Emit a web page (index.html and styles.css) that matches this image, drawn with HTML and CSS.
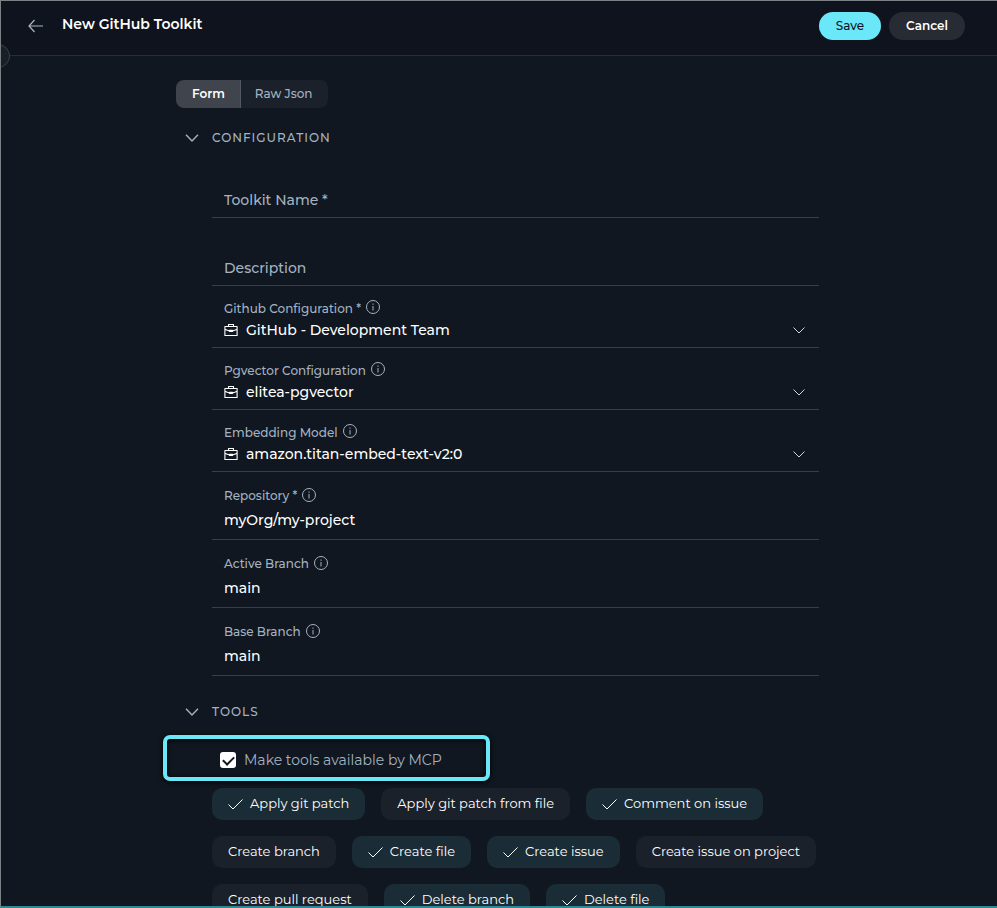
FILE: index.html
```html
<!DOCTYPE html>
<html lang="en">
<head>
  <meta charset="UTF-8">
  <meta name="viewport" content="width=device-width, initial-scale=1.0">
  <title>New GitHub Toolkit</title>
  <link rel="stylesheet" href="styles.css">
</head>
<body>
  <!-- shared icons -->
  <svg class="sprite" aria-hidden="true">
    <symbol id="icon-info" viewBox="0 0 16 16">
      <circle cx="8" cy="8" r="6.5" fill="none" stroke="currentColor" stroke-width="1"/>
      <path d="M8 7v4.500M8 4.500v1.300" fill="none" stroke="currentColor" stroke-width="1"/>
    </symbol>
    <symbol id="icon-case" viewBox="0 0 14 14">
      <path d="M.9 3.500h12.200v9H.9zM4.500 3.300V1.500h5v1.800M1 6.300c1.500.9 3 1.400 4.500 1.600M13 6.300c-1.500.9-3 1.400-4.500 1.600M5.500 7.400h3v1.100h-3z" fill="none" stroke="currentColor" stroke-width="1.1" stroke-linejoin="round"/>
    </symbol>
    <symbol id="icon-chevron" viewBox="0 0 16 16">
      <path d="M2.500 5.500 8 11l5.500-5.500" fill="none" stroke="currentColor" stroke-width="1"/>
    </symbol>
    <symbol id="icon-chevron-bold" viewBox="0 0 16 16">
      <path d="M2 4.800 8 11l6-6.200" fill="none" stroke="currentColor" stroke-width="1.4"/>
    </symbol>
    <symbol id="icon-check" viewBox="0 0 16 16">
      <path d="M.5 8.500l4.500 4.500 9.500-9.500" fill="none" stroke="currentColor" stroke-width="1"/>
    </symbol>
  </svg>

  <header class="topbar">
    <button type="button" class="back-btn" aria-label="Back">
      <svg viewBox="0 0 16 16"><path d="M15 8H1.500M6.500 2 1 8 6.500 14" fill="none" stroke="currentColor" stroke-width="1.2"/></svg>
    </button>
    <h1>New GitHub Toolkit</h1>
    <div class="actions">
      <button type="submit" form="toolkit-form" class="btn btn-save">Save</button>
      <button type="button" class="btn btn-cancel">Cancel</button>
    </div>
    <button type="button" class="sidebar-toggle" aria-label="Open sidebar"></button>
  </header>

  <main>
    <form id="toolkit-form" class="container">
      <div class="tabs">
        <button type="button" class="tab active">Form</button>
        <button type="button" class="tab">Raw Json</button>
      </div>

      <section>
        <h2><button type="button" class="section-btn" aria-expanded="true"><svg><use href="#icon-chevron-bold"/></svg><span>Configuration</span></button></h2>
        <div class="section-body">
          <div class="field field-empty">
            <input type="text" id="name" aria-label="Toolkit Name" placeholder="Toolkit Name *" required>
          </div>
          <div class="field field-empty">
            <input type="text" id="description" aria-label="Description" placeholder="Description">
          </div>
          <div class="field field-select">
            <div class="field-label"><label for="github">Github Configuration *</label><svg><use href="#icon-info"/></svg></div>
            <div class="select-row">
              <svg class="case"><use href="#icon-case"/></svg>
              <select id="github"><option>GitHub - Development Team</option></select>
              <svg class="chevron"><use href="#icon-chevron"/></svg>
            </div>
          </div>
          <div class="field field-select">
            <div class="field-label"><label for="pgvector">Pgvector Configuration</label><svg><use href="#icon-info"/></svg></div>
            <div class="select-row">
              <svg class="case"><use href="#icon-case"/></svg>
              <select id="pgvector"><option>elitea-pgvector</option></select>
              <svg class="chevron"><use href="#icon-chevron"/></svg>
            </div>
          </div>
          <div class="field field-select">
            <div class="field-label"><label for="embedding">Embedding Model</label><svg><use href="#icon-info"/></svg></div>
            <div class="select-row">
              <svg class="case"><use href="#icon-case"/></svg>
              <select id="embedding"><option>amazon.titan-embed-text-v2:0</option></select>
              <svg class="chevron"><use href="#icon-chevron"/></svg>
            </div>
          </div>
          <div class="field">
            <div class="field-label"><label for="repository">Repository *</label><svg><use href="#icon-info"/></svg></div>
            <input type="text" id="repository" value="myOrg/my-project" required>
          </div>
          <div class="field">
            <div class="field-label"><label for="active-branch">Active Branch</label><svg><use href="#icon-info"/></svg></div>
            <input type="text" id="active-branch" value="main">
          </div>
          <div class="field">
            <div class="field-label"><label for="base-branch">Base Branch</label><svg><use href="#icon-info"/></svg></div>
            <input type="text" id="base-branch" value="main">
          </div>
        </div>
      </section>

      <section class="tools">
        <h2><button type="button" class="section-btn" aria-expanded="true"><svg><use href="#icon-chevron-bold"/></svg><span>Tools</span></button></h2>
        <div class="mcp">
          <input type="checkbox" id="mcp" checked>
          <label for="mcp">Make tools available by MCP</label>
        </div>
        <div class="chips">
          <button type="button" class="chip selected"><svg><use href="#icon-check"/></svg><span>Apply git patch</span></button>
          <button type="button" class="chip"><span>Apply git patch from file</span></button>
          <button type="button" class="chip selected"><svg><use href="#icon-check"/></svg><span>Comment on issue</span></button>
          <button type="button" class="chip"><span>Create branch</span></button>
          <button type="button" class="chip selected"><svg><use href="#icon-check"/></svg><span>Create file</span></button>
          <button type="button" class="chip selected"><svg><use href="#icon-check"/></svg><span>Create issue</span></button>
          <button type="button" class="chip"><span>Create issue on project</span></button>
          <button type="button" class="chip"><span>Create pull request</span></button>
          <button type="button" class="chip selected"><svg><use href="#icon-check"/></svg><span>Delete branch</span></button>
          <button type="button" class="chip selected"><svg><use href="#icon-check"/></svg><span>Delete file</span></button>
        </div>
      </section>
    </form>
  </main>
</body>
</html>
```
FILE: styles.css
```css
* {
  box-sizing: border-box;
}

body {
  margin: 0;
  height: 100vh;
  display: flex;
  flex-direction: column;
  overflow: hidden;
  background: #101720;
  color: #ffffff;
  font-family: Montserrat, Inter, sans-serif;
  font-size: 14px;
  font-weight: 500;
  border-top: 1px solid #7c8186;
  border-left: 1px solid #7c8186;
  border-bottom: 2px solid #2f8795;
}

button,
input,
select {
  font: inherit;
  color: inherit;
}

button {
  border: none;
  padding: 0;
  background: none;
  cursor: pointer;
}

.sprite {
  display: none;
}

.topbar {
  position: relative;
  flex: none;
  display: flex;
  align-items: center;
  height: 55px;
  padding: 0 32px 4px 27px;
  background: #0e131d;
  border-bottom: 1px solid #272c35;
}

.back-btn {
  width: 16px;
  height: 16px;
  margin-right: 18px;
  color: #a9b7c1;
}

.back-btn svg {
  display: block;
  width: 16px;
  height: 16px;
}

.topbar h1 {
  margin: 0;
  padding-bottom: 4px;
  font-size: 14px;
  line-height: 20px;
  font-weight: 600;
}

.actions {
  display: flex;
  gap: 8px;
  margin-left: auto;
}

.btn {
  height: 28px;
  padding: 0 17px 2px;
  border-radius: 14px;
  font-size: 12px;
}

.btn-save {
  background: #6ae8fa;
  color: #0e131d;
}

.btn-cancel {
  background: #262b34;
  font-weight: 600;
}

.sidebar-toggle {
  position: absolute;
  left: -15px;
  bottom: -13px;
  width: 24px;
  height: 24px;
  border: 1px solid #3b4048;
  border-radius: 50%;
  background: #181f29;
}

main {
  flex: 1;
  min-height: 0;
  overflow: hidden;
}

.container {
  max-width: 646px;
  margin: 0 auto;
  padding: 24px 3px 0 0;
}

.tabs {
  display: flex;
  margin-bottom: 18px;
}

.tab {
  height: 28px;
  padding: 0 15px 2px 14px;
  background: #1b212b;
  color: #a4b3c2;
  font-size: 12px;
  border-radius: 0 8px 8px 0;
}

.tab.active {
  padding: 0 15px 2px 16px;
  background: #40444c;
  color: #ffffff;
  font-weight: 600;
  border-right: 1px solid #53575e;
  border-radius: 8px 0 0 8px;
}

h2 {
  margin: 0;
}

.section-btn {
  display: flex;
  align-items: center;
  gap: 12px;
  height: 24px;
  padding-left: 8px;
  color: #a4b3c2;
  font-size: 12px;
  font-weight: 500;
  letter-spacing: 1px;
  text-transform: uppercase;
}

.section-btn span {
  padding-bottom: 2px;
}

.section-btn svg {
  width: 16px;
  height: 16px;
}

.section-body {
  padding-left: 36px;
}

.field {
  display: flex;
  flex-direction: column;
  justify-content: flex-end;
  height: 68px;
  padding: 0 12px 7px;
  border-bottom: 1px solid #3b3e46;
}

.field-empty {
  padding-bottom: 5px;
}

.field-select {
  height: 62px;
  padding-bottom: 6px;
}

.field-label {
  display: flex;
  align-items: center;
  gap: 4px;
  height: 16px;
  margin-bottom: 5px;
  color: #a4b3c2;
  font-size: 12px;
}

.field-select .field-label {
  align-items: flex-end;
  margin-bottom: 3px;
}

.field-label svg {
  width: 16px;
  height: 16px;
}

.field-select .field-label svg {
  margin-bottom: 1px;
}

.field input {
  width: 100%;
  height: 24px;
  padding: 0;
  border: none;
  outline: none;
  background: none;
}

.field input::placeholder {
  color: #a4b3c2;
  opacity: 1;
}

.select-row {
  display: flex;
  align-items: center;
  height: 22px;
}

.select-row .case {
  width: 14px;
  height: 14px;
  margin-right: 8px;
}

.select-row .chevron {
  width: 16px;
  height: 16px;
  color: #cfd5da;
}

.field select {
  flex: 1;
  min-width: 0;
  padding: 0;
  border: none;
  outline: none;
  appearance: none;
  background: none;
}

.tools {
  margin-top: 24px;
}

/* highlighted option */
.mcp {
  display: flex;
  align-items: center;
  gap: 8px;
  width: fit-content;
  height: 46px;
  margin: 11px 0 7px -13px;
  padding: 4px 44px 0 53px;
  border: 4px solid #6ae8fa;
  border-radius: 7px;
  box-shadow: 0 1px 5px #000000, inset 0 1px 5px #000000;
  color: #a4b3c2;
  font-weight: 400;
}

.mcp input {
  appearance: none;
  width: 16px;
  height: 16px;
  margin: 0;
  border-radius: 3px;
  background: #ffffff;
}

.mcp input:checked::before {
  content: "";
  display: block;
  width: 9px;
  height: 5px;
  margin: 4px 3px;
  border-left: 2px solid #101720;
  border-bottom: 2px solid #101720;
  transform: rotate(-45deg);
}

.chips {
  display: flex;
  flex-wrap: wrap;
  gap: 16px;
  padding-left: 36px;
}

.chip {
  display: flex;
  align-items: center;
  gap: 6px;
  height: 32px;
  padding: 0 16px;
  border-radius: 10px;
  background: #1b212b;
  font-size: 13px;
  font-weight: 400;
}

.chip span {
  padding-bottom: 2px;
}

.chip.selected {
  background: #1a2c35;
}

.chip svg {
  width: 16px;
  height: 16px;
}
```
